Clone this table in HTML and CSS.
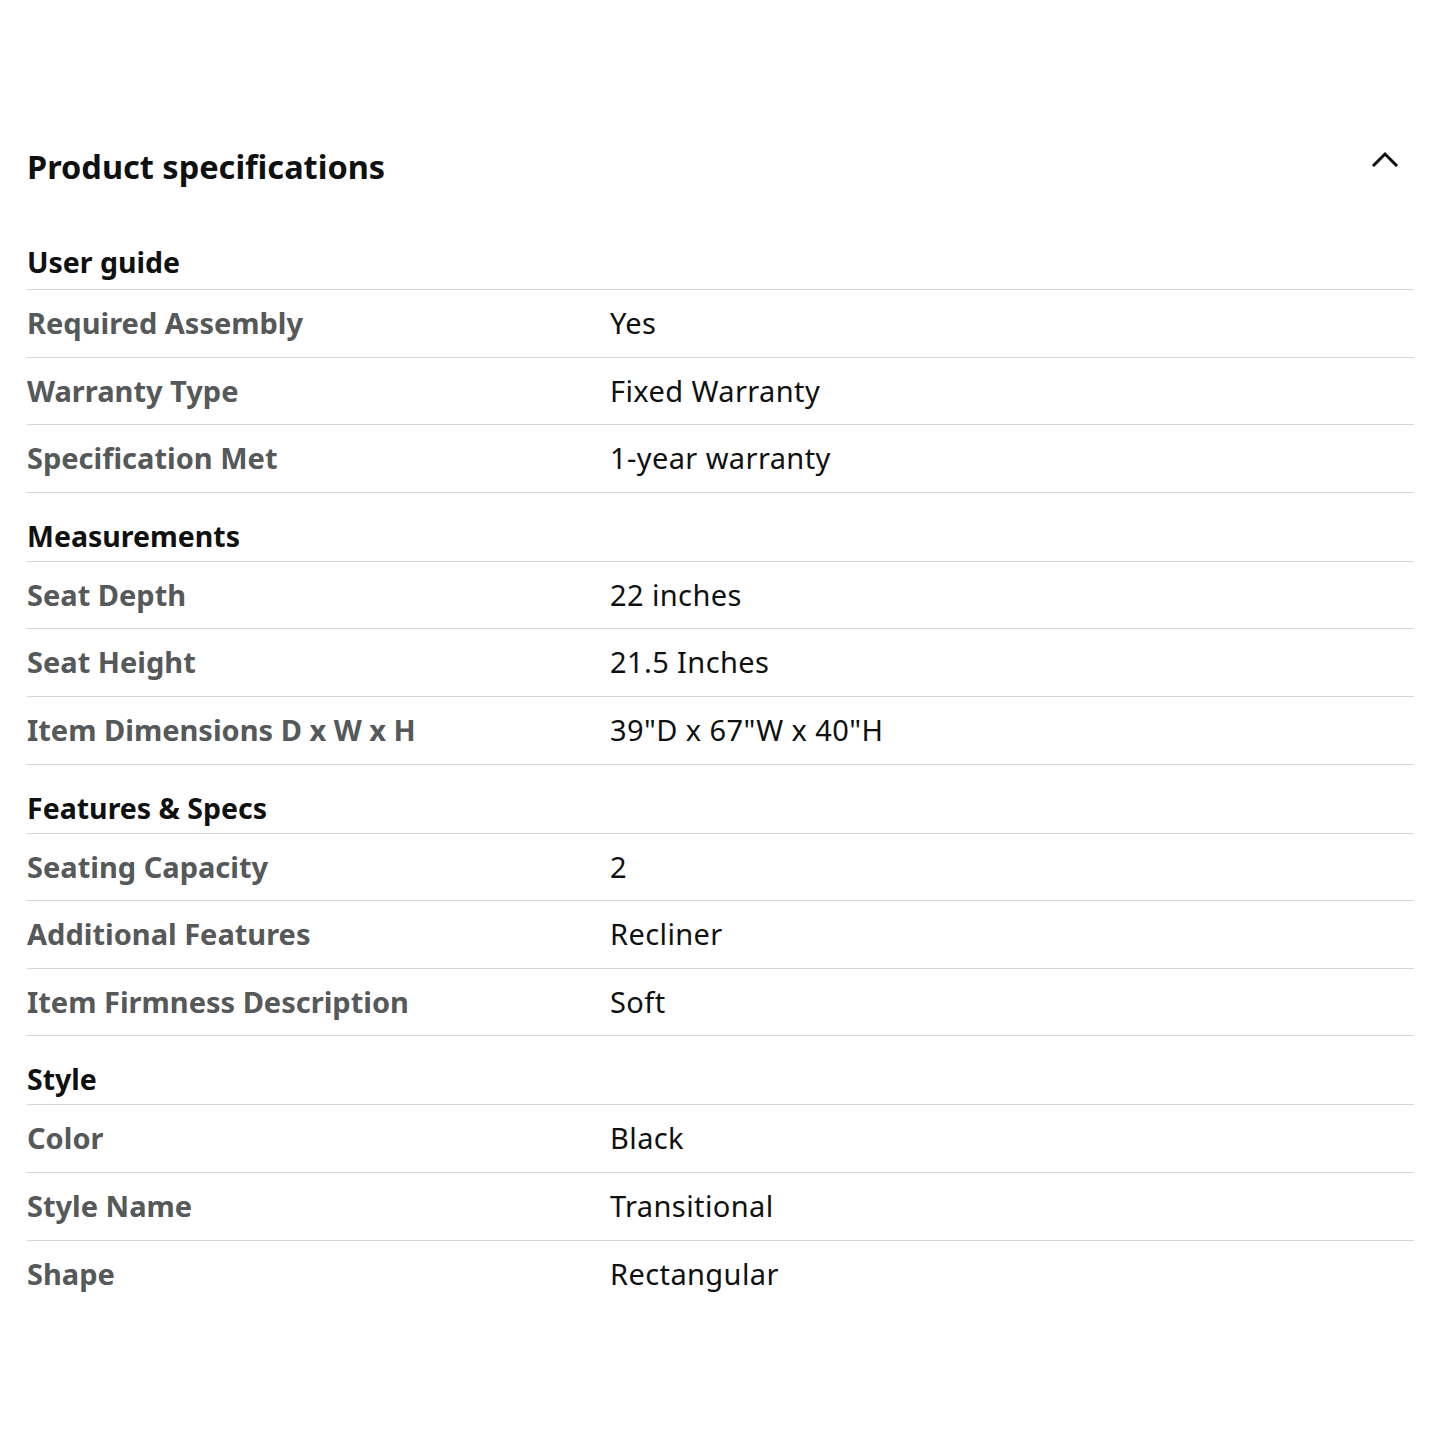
FILE: index.html
```html
<!DOCTYPE html>
<html lang="en">
<head>
    <meta charset="UTF-8">
    <meta name="viewport" content="width=device-width, initial-scale=1.0">
    <title>Product specifications</title>
    <link rel="stylesheet" href="styles.css">
</head>
<body>

<section class="specs">
    <div class="specs-header">
        <h2>Product specifications</h2>
        <button class="collapse-btn" aria-label="Collapse">
            <svg width="28" height="18" viewBox="0 0 28 18">
                <path d="M3 16 L14 5 L25 16" fill="none" stroke="#0f1111" stroke-width="3" stroke-linecap="square"/>
            </svg>
        </button>
    </div>

    <div class="spec-group first">
        <h3 class="group-title">User guide</h3>
        <div class="spec-row"><span class="spec-label">Required Assembly</span><span class="spec-value">Yes</span></div>
        <div class="spec-row"><span class="spec-label">Warranty Type</span><span class="spec-value">Fixed Warranty</span></div>
        <div class="spec-row"><span class="spec-label">Specification Met</span><span class="spec-value">1-year warranty</span></div>
    </div>

    <div class="spec-group">
        <h3 class="group-title">Measurements</h3>
        <div class="spec-row"><span class="spec-label">Seat Depth</span><span class="spec-value">22 inches</span></div>
        <div class="spec-row"><span class="spec-label">Seat Height</span><span class="spec-value">21.5 Inches</span></div>
        <div class="spec-row"><span class="spec-label">Item Dimensions D x W x H</span><span class="spec-value">39"D x 67"W x 40"H</span></div>
    </div>

    <div class="spec-group">
        <h3 class="group-title">Features &amp; Specs</h3>
        <div class="spec-row"><span class="spec-label">Seating Capacity</span><span class="spec-value">2</span></div>
        <div class="spec-row"><span class="spec-label">Additional Features</span><span class="spec-value">Recliner</span></div>
        <div class="spec-row"><span class="spec-label">Item Firmness Description</span><span class="spec-value">Soft</span></div>
    </div>

    <div class="spec-group">
        <h3 class="group-title">Style</h3>
        <div class="spec-row"><span class="spec-label">Color</span><span class="spec-value">Black</span></div>
        <div class="spec-row"><span class="spec-label">Style Name</span><span class="spec-value">Transitional</span></div>
        <div class="spec-row last"><span class="spec-label">Shape</span><span class="spec-value">Rectangular</span></div>
    </div>
</section>

</body>
</html>
```

FILE: styles.css
```css
body {
    margin: 0;
    background-color: #fff;
    font-family: "Noto Sans", "Open Sans", sans-serif;
    color: #0f1111;
}

/* Specs section */
.specs {
    padding: 147px 26px 100px 27px;
}

.specs-header {
    display: flex;
    justify-content: space-between;
    align-items: flex-start;
}

.specs-header h2 {
    margin: 0;
    font-size: 32.5px;
    line-height: 40px;
    font-weight: bold;
}

.collapse-btn {
    background: none;
    border: none;
    padding: 0;
    margin: 2px 15px 0 0;
    cursor: pointer;
    display: flex;
}

/* Groups and rows */
.group-title {
    margin: 0;
    padding: 26px 0 8px;
    font-size: 28.5px;
    line-height: 34px;
    font-weight: bold;
    border-bottom: 1px solid #d5d9d9;
}

.spec-group.first .group-title {
    padding: 58px 0 10px;
}

.spec-row {
    display: grid;
    grid-template-columns: 583px 1fr;
    padding: 16px 0 16.6px;
    font-size: 29px;
    line-height: 34px;
    border-bottom: 1px solid #d5d9d9;
}

.spec-row.last {
    border-bottom: none;
}

.spec-label {
    font-weight: bold;
    color: #565959;
}

.spec-value {
    color: #0f1111;
    letter-spacing: 0.4px;
}
```
